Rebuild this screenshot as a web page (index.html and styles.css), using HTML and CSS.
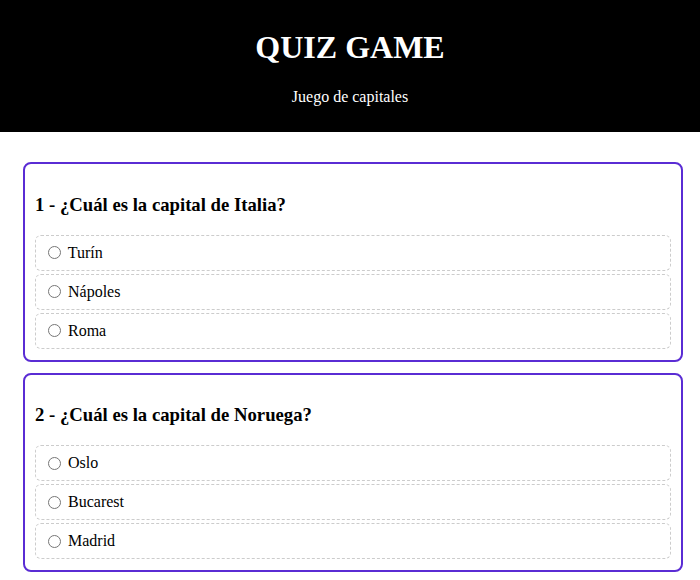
FILE: index.html
```html
<!DOCTYPE html>
<html lang="es">
<head>
<meta charset="utf-8">
<title>Quiz Game</title>
<link rel="stylesheet" href="styles.css">
</head>
<body>
<header class="header">
  <h1 class="title">QUIZ GAME</h1>
  <p class="subtitle">Juego de capitales</p>
</header>
<main class="quiz">
  <section class="card">
    <h3 class="question">1 - ¿Cuál es la capital de Italia?</h3>
    <label class="option"><input type="radio" name="q1"> Turín</label>
    <label class="option"><input type="radio" name="q1"> Nápoles</label>
    <label class="option"><input type="radio" name="q1"> Roma</label>
  </section>
  <section class="card">
    <h3 class="question">2 - ¿Cuál es la capital de Noruega?</h3>
    <label class="option"><input type="radio" name="q2"> Oslo</label>
    <label class="option"><input type="radio" name="q2"> Bucarest</label>
    <label class="option"><input type="radio" name="q2"> Madrid</label>
  </section>
</main>
</body>
</html>
```
FILE: styles.css
```css
body {
  margin: 0;
  font-family: "Liberation Serif", "Times New Roman", serif;
  color: #000;
  background: #fff;
}
.header {
  background: #000;
  color: #fff;
  text-align: center;
  padding: 8px 0 10px;
}
.title {
  font-size: 32px;
  margin: 21px 0 22px;
}
.subtitle {
  font-size: 16px;
  margin: 16px 0;
}
.quiz {
  padding: 30px 17px 0 23px;
  display: flex;
  flex-direction: column;
  gap: 11px;
}
.card {
  border: 2px solid #5a2cd4;
  border-radius: 8px;
  padding: 10px 10px 11px;
  display: flex;
  flex-direction: column;
  gap: 3px;
}
.question {
  font-size: 18.72px;
  margin: 19.72px 0 16px;
}
.option {
  display: flex;
  align-items: center;
  box-sizing: border-box;
  height: 36px;
  border: 1px dashed #ccc;
  border-radius: 6px;
  padding: 0 7px;
  font-size: 16px;
  white-space: pre;
}
.option input {
  margin: 0 3px 0 5px;
}
```
